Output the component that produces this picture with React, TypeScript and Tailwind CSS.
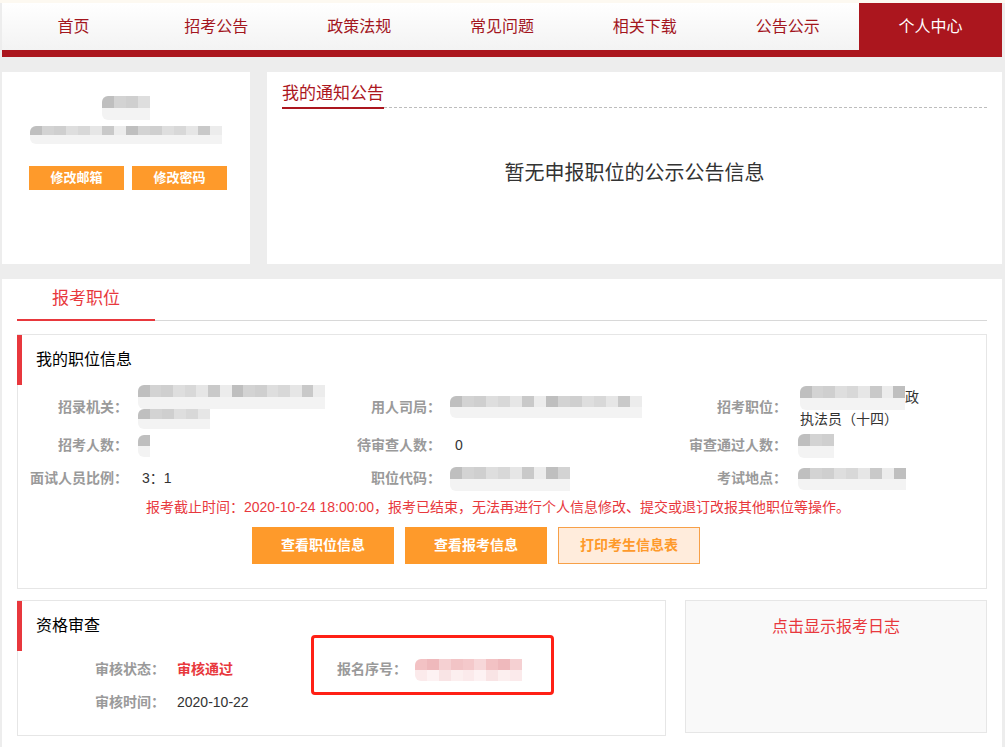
import { useState } from 'react'

const navItems = ['首页', '招考公告', '政策法规', '常见问题', '相关下载', '公告公示', '个人中心']

const greys = ['bg-[#d3d3d3]', 'bg-[#c9c9c9]', 'bg-[#dedede]', 'bg-[#bfbfbf]', 'bg-[#e6e6e6]', 'bg-[#cfcfcf]', 'bg-[#ececec]', 'bg-[#d8d8d8]']
const pinks = ['bg-[#f2c4c6]', 'bg-[#f5d0d2]', 'bg-[#efb9bc]', 'bg-[#f3c2c4]', 'bg-[#f7d7d9]', 'bg-[#f4c9cb]']
const paleGreys = ['bg-[#e4e4e4]', 'bg-[#eeeeee]', 'bg-[#dcdcdc]', 'bg-[#f3f3f3]', 'bg-[#e8e8e8]']
const palePinks = ['bg-[#fbeaeb]', 'bg-[#fdf2f3]', 'bg-[#f9e4e5]', 'bg-[#fcefef]']

// fake "blurred" mosaic, like the pixelated bits in the screenshot
const Mosaic = ({ cols, rows, size, tone = 'grey' }: { cols: number; rows: number; size: string; tone?: 'grey' | 'pink' }) => {
  const lines = []
  for (let r = 0; r < rows; r++) {
    const cells = []
    const last = r === rows - 1 && rows > 1
    let pal = tone === 'pink' ? pinks : greys
    if (last) pal = tone === 'pink' ? palePinks : paleGreys
    for (let c = 0; c < cols; c++) {
      const i = r * cols + c
      cells.push(<div key={c} className={`h-full flex-1 ${pal[(i * 5 + 3) % pal.length]}`} />)
    }
    lines.push(
      <div key={r} className="flex flex-1">
        {cells}
      </div>
    )
  }
  return <div className={`flex shrink-0 flex-col overflow-hidden rounded-l-[6px] ${size}`}>{lines}</div>
}

const Label = ({ children, className = '' }: { children: string; className?: string }) => (
  <div className={`text-right text-[14px] font-bold text-[#9a9a9a] ${className}`}>{children}</div>
)

const App = () => {
  const [active] = useState(6)

  return (
    <div className="min-h-screen bg-[#ededed] font-['Liberation_Sans','Noto_Sans_CJK_SC',sans-serif] text-[#333]">
      <div className="h-[3px] bg-[#fdf9f1]" />
      <div className="ml-[2px] w-[1000px]">
        {/* nav */}
        <div className="grid h-[47px] grid-cols-7 bg-gradient-to-b from-white to-[#f3f3f3]">
          {navItems.map((item, i) => (
            <div
              key={item}
              className={`flex items-center justify-center text-[16px] ${i === active ? 'bg-[#ab161e] text-white' : 'text-[#a3161e]'}`}
            >
              {item}
            </div>
          ))}
        </div>
        <div className="h-[7px] bg-[#ab161e]" />

        {/* top cards */}
        <div className="mt-[15px] flex h-[192px] gap-[17px]">
          <div className="flex w-[248px] flex-col items-center bg-white pt-[24px]">
            <Mosaic cols={4} rows={2} size="h-[24px] w-[48px]" />
            <div className="mt-[6px]">
              <Mosaic cols={16} rows={2} size="h-[18px] w-[192px]" />
            </div>
            <div className="mt-[22px] flex gap-[8px] pl-[4px]">
              <button className="h-[24px] w-[95px] bg-[#fe9a2b] text-[13px] font-bold text-white">修改邮箱</button>
              <button className="h-[24px] w-[95px] bg-[#fe9a2b] text-[13px] font-bold text-white">修改密码</button>
            </div>
          </div>
          <div className="flex flex-1 flex-col bg-white px-[15px] pt-[10px]">
            <div className="flex items-end">
              <div className="border-b-2 border-[#ab161e] pb-[2px] text-[17px] leading-[23px] text-[#ab161e]">我的通知公告</div>
              <div className="mb-px flex-1 border-b border-dashed border-[#bdbdbd]" />
            </div>
            <div className="mt-[50px] text-center text-[20px] leading-[28px] text-[#333]">暂无申报职位的公示公告信息</div>
          </div>
        </div>

        {/* main panel */}
        <div className="mt-[15px] bg-white px-[15px] pb-[15px]">
          <div className="flex border-b border-[#d8d8d8]">
            <div className="-mb-px flex h-[42px] w-[138px] items-center justify-center border-b-2 border-[#e8383d] text-[17px] text-[#e8383d]">
              报考职位
            </div>
          </div>

          <div className="mt-[13px] border border-[#e6e6e6] pb-[24px]">
            <div className="-ml-px flex h-[50px] items-center border-l-[5px] border-[#e8383d] pl-[14px] text-[16px] text-black">
              我的职位信息
            </div>
            <div className="grid grid-cols-[110px_212px_101px_235px_111px_1fr] items-center text-[14px]">
              {/* row 1 */}
              <Label className="h-[44px] leading-[44px]">招录机关：</Label>
              <div className="pl-[10px]">
                <Mosaic cols={16} rows={2} size="h-[24px] w-[187px]" />
                <Mosaic cols={6} rows={2} size="h-[20px] w-[72px]" />
              </div>
              <Label>用人司局：</Label>
              <div className="pl-[9px]">
                <Mosaic cols={16} rows={2} size="h-[22px] w-[192px]" />
              </div>
              <Label>招考职位：</Label>
              <div className="pl-[13px] leading-[19px]">
                <div className="flex items-center">
                  <Mosaic cols={9} rows={2} size="h-[24px] w-[105px]" />
                  <span>政</span>
                </div>
                <div>执法员（十四）</div>
              </div>

              {/* row 2 */}
              <Label className="h-[33px] leading-[33px]">招考人数：</Label>
              <div className="pl-[10px]">
                <Mosaic cols={1} rows={2} size="h-[22px] w-[12px]" />
              </div>
              <Label>待审查人数：</Label>
              <div className="pl-[14px]">0</div>
              <Label>审查通过人数：</Label>
              <div className="pl-[11px]">
                <Mosaic cols={3} rows={2} size="h-[24px] w-[36px]" />
              </div>

              {/* row 3 */}
              <Label className="h-[33px] leading-[33px]">面试人员比例：</Label>
              <div className="pl-[14px]">3：1</div>
              <Label>职位代码：</Label>
              <div className="pl-[9px]">
                <Mosaic cols={10} rows={2} size="h-[24px] w-[120px]" />
              </div>
              <Label>考试地点：</Label>
              <div className="pl-[11px]">
                <Mosaic cols={9} rows={2} size="h-[22px] w-[108px]" />
              </div>
            </div>

            <div className="mt-[2px] pr-[8px] text-center text-[14px] leading-[20px] text-[#e8383d]">
              报考截止时间：2020-10-24 18:00:00，报考已结束，无法再进行个人信息修改、提交或退订改报其他职位等操作。
            </div>

            <div className="mt-[10px] flex gap-[11px] pl-[234px]">
              <button className="h-[37px] w-[142px] bg-[#fe9a2b] text-[14px] font-bold text-white">查看职位信息</button>
              <button className="h-[37px] w-[142px] bg-[#fe9a2b] text-[14px] font-bold text-white">查看报考信息</button>
              <button className="h-[37px] w-[142px] border border-[#f7a048] bg-[#ffecdc] text-[14px] font-bold text-[#fe9a2b]">
                打印考生信息表
              </button>
            </div>
          </div>

          {/* bottom boxes */}
          <div className="mt-[11px] flex items-start gap-[19px]">
            <div className="relative h-[136px] w-[649px] border border-[#e6e6e6]">
              <div className="-ml-px flex h-[50px] items-center border-l-[5px] border-[#e8383d] pl-[14px] text-[16px] text-black">
                资格审查
              </div>
              <div className="mt-[2px] flex h-[33px] items-center pl-[77px] text-[14px]">
                <div className="w-[82px] text-[14px] font-bold text-[#9a9a9a]">审核状态：</div>
                <div className="w-[160px] font-bold text-[#e8383d]">审核通过</div>
                <div className="w-[78px] text-[14px] font-bold text-[#9a9a9a]">报名序号：</div>
                <Mosaic cols={9} rows={2} size="h-[22px] w-[107px]" tone="pink" />
              </div>
              <div className="flex h-[33px] items-center pl-[77px] text-[14px]">
                <div className="w-[82px] text-[14px] font-bold text-[#9a9a9a]">审核时间：</div>
                <div>2020-10-22</div>
              </div>
              <div className="absolute left-[293px] top-[34px] h-[60px] w-[243px] rounded-[4px] border-[3px] border-[#ff2015]" />
            </div>
            <div className="h-[133px] w-[302px] border border-[#e6e6e6] bg-[#f9f9f9] pt-[15px] text-center text-[16px] leading-[22px] text-[#e8383d]">
              点击显示报考日志
            </div>
          </div>
        </div>
      </div>
    </div>
  )
}

export default App
